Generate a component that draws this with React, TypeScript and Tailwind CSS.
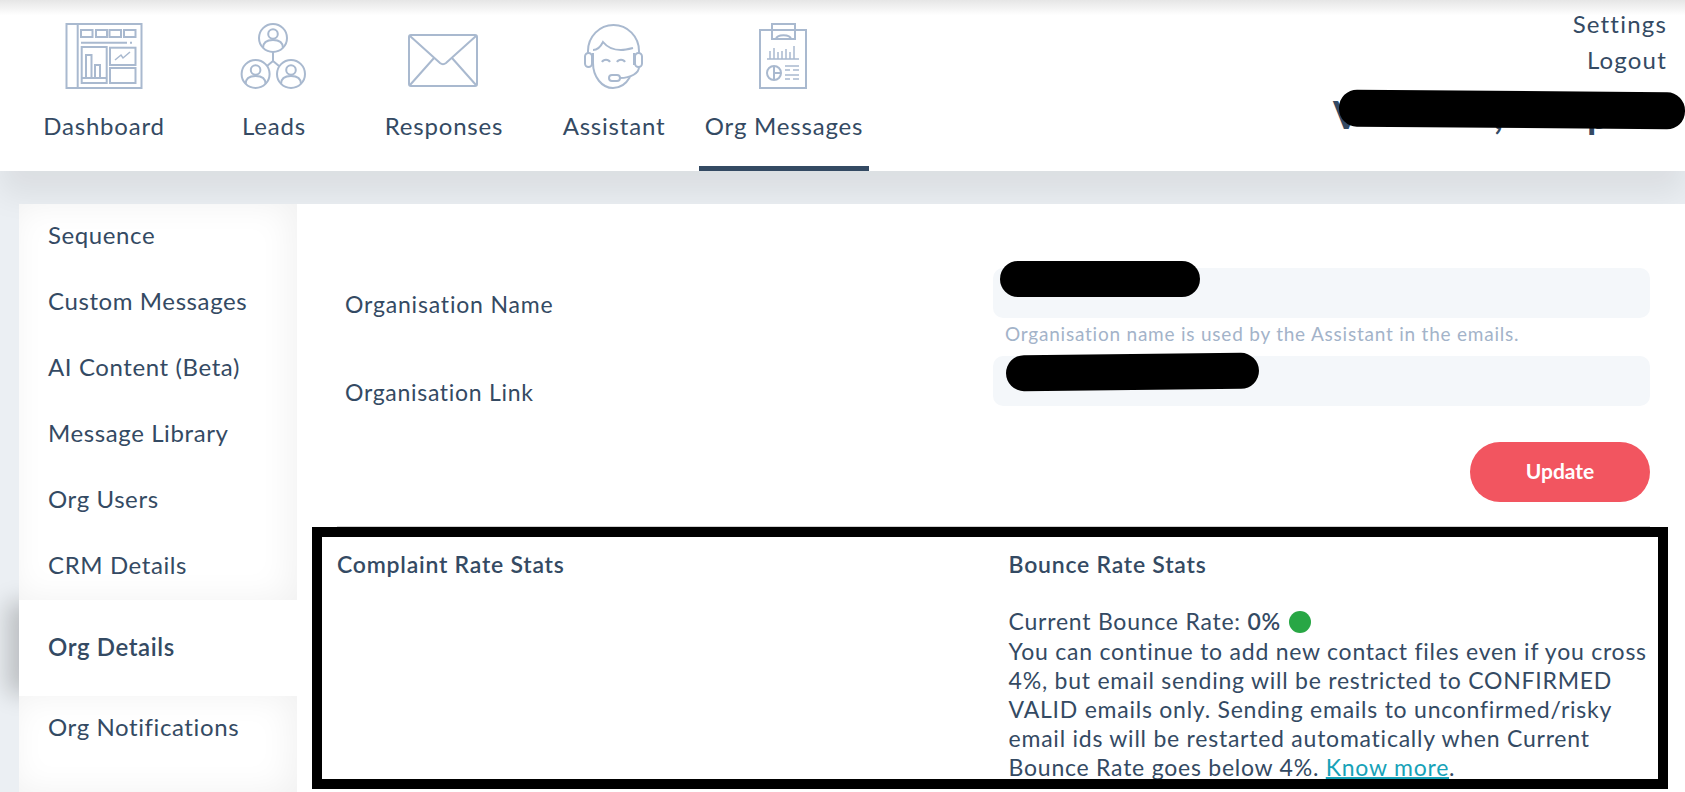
import React from "react";

const iconClass = "h-[72px] w-[80px] fill-none stroke-[#a9b9cf] stroke-[2]";

function DashboardIcon() {
  return (
    <svg viewBox="0 0 80 72" className={iconClass}>
      <rect x="2.5" y="4" width="75" height="64" />
      <path d="M13.7 4v64" />
      <rect x="17" y="10" width="11.5" height="7" />
      <rect x="32" y="10" width="11" height="7" />
      <rect x="45.5" y="10" width="11.5" height="7" />
      <rect x="60" y="10" width="11.5" height="7" />
      <path d="M17 22.7h46M66 22.7h2" />
      <rect x="17.7" y="27" width="25" height="36" />
      <path d="M17.7 58h25" />
      <rect x="22" y="35" width="5.5" height="23" />
      <rect x="31" y="45" width="5" height="13" />
      <rect x="46" y="27.7" width="25.5" height="17.3" />
      <path d="M51 40l6-5 2 3 7-6" strokeWidth="1.5" />
      <rect x="46" y="48" width="25.5" height="15" />
    </svg>
  );
}

function Person({ cx, cy }: { cx: number; cy: number }) {
  return (
    <g>
      <circle cx={cx} cy={cy} r="14" />
      <circle cx={cx} cy={cy - 4} r="4.8" />
      <path d={`M${cx - 10} ${cy + 10}c0-6 4-8 10-8s10 2 10 8`} />
    </g>
  );
}

function LeadsIcon() {
  return (
    <svg viewBox="0 0 80 72" className={iconClass}>
      <Person cx={39} cy={18} />
      <Person cx={21.6} cy={54} />
      <Person cx={57} cy={54} />
      <path d="M39 32v9M39 41l-6 5M39 41l6 5" />
    </svg>
  );
}

function ResponsesIcon() {
  return (
    <svg viewBox="0 0 80 72" className={iconClass}>
      <rect x="5" y="15" width="68" height="51" rx="2" />
      <path d="M6 16l30 27c2 1.6 4 1.6 6 0l30-27M6 65l24-27M72 65L48 38" />
    </svg>
  );
}

function AssistantIcon() {
  return (
    <svg viewBox="0 0 80 72" className={iconClass}>
      <path d="M14 33v-2a25.5 26 0 0 1 51 0v2" />
      <rect x="11" y="33" width="7" height="14" rx="3.5" />
      <rect x="61" y="33" width="7" height="14" rx="3.5" />
      <path d="M19 30c5 0 8-4 10-8 4 5 10 8 18 8 4 0 8-1 12-2" />
      <path d="M19 33v10c0 14 9 25 20 25 7 0 13-4 17-11M60 33v12" />
      <path d="M65 47c0 6-8 11-19 11" />
      <rect x="35" y="55" width="11" height="6" rx="3" />
      <path d="M28 42c1.5-3 6.5-3 8 0M43 42c1.5-3 6.5-3 8 0" />
    </svg>
  );
}

function OrgMessagesIcon() {
  return (
    <svg viewBox="0 0 80 72" className={iconClass}>
      <rect x="16" y="10" width="46" height="58" />
      <path d="M28 4h23v15H28zM32 19c1-5 14-5 15 0" />
      <path d="M23 39h32M26 39v-8M30 39v-11M34 39v-7M38 39v-8M42 39v-10M46 39v-7M50 39v-13" strokeWidth="1.5" />
      <circle cx="30" cy="53" r="7" />
      <path d="M30 46v14M30 53h7" />
      <path d="M41 46h14M41 50h5M49 50h6M41 55h14M41 59h5M49 59h6" strokeWidth="1.5" />
    </svg>
  );
}

const tabs = [
  { label: "Dashboard", icon: <DashboardIcon /> },
  { label: "Leads", icon: <LeadsIcon /> },
  { label: "Responses", icon: <ResponsesIcon /> },
  { label: "Assistant", icon: <AssistantIcon /> },
  { label: "Org Messages", icon: <OrgMessagesIcon />, active: true },
];

const sideItems = ["Sequence", "Custom Messages", "AI Content (Beta)", "Message Library", "Org Users", "CRM Details"];

const sideGroup = "relative z-10 bg-white shadow-[inset_-6px_0_34px_rgba(0,0,0,0.06)]";
const sideItem = "flex h-[66px] items-center pb-[4px] pl-[29px]";

function Blob({ className }: { className: string }) {
  return <div className={`absolute rounded-[18px] bg-black ${className}`} />;
}

export default function App() {
  return (
    <div className="flex h-[792px] w-[1685px] flex-col overflow-hidden bg-[#ebeff3] font-['Lato',sans-serif] text-[#344a63]">
      <header className="relative z-10 flex h-[171px] shrink-0 bg-gradient-to-b from-[#e6e6e6] via-white via-[9%] to-white pl-[19px] shadow-[0_24px_30px_rgba(0,0,0,0.07)]">
        {tabs.map((t) => (
          <div
            key={t.label}
            className={`flex h-[171px] w-[170px] flex-col items-center border-b-[5px] pt-[20px] ${
              t.active ? "border-[#344a63]" : "border-transparent"
            }`}
          >
            {t.icon}
            <span className="mt-[19px] text-[24px] leading-[30px] tracking-[0.8px]">{t.label}</span>
          </div>
        ))}
        <div className="ml-auto flex flex-col items-end pr-[18px] pt-[6px] text-[24px] leading-[36px] tracking-[1.2px]">
          <span>Settings</span>
          <span>Logout</span>
        </div>
        <span className="absolute left-[1333px] top-[91px] text-[38px] font-bold leading-[46px]">V</span>
        <span className="absolute left-[1494px] top-[91px] text-[38px] font-bold leading-[46px]">,</span>
        <span className="absolute left-[1587px] top-[91px] text-[38px] font-bold leading-[46px]">p</span>
        <div className="absolute left-[1339px] top-[91px] h-[37px] w-[346px] rotate-[0.5deg] rounded-[18px] bg-black" />
      </header>

      <div className="flex flex-1 pl-[19px] pt-[33px]">
        <aside className="relative z-20 flex w-[278px] shrink-0 flex-col text-[24px] tracking-[0.6px]">
          <div className={sideGroup}>
            {sideItems.map((s) => (
              <div key={s} className={sideItem}>
                {s}
              </div>
            ))}
          </div>
          <div className="flex h-[96px] items-center bg-white pb-[3px] pl-[29px] font-semibold shadow-[-14px_0_22px_-2px_rgba(0,0,0,0.2)]">
            Org Details
          </div>
          <div className={`${sideGroup} flex-1`}>
            <div className={sideItem}>Org Notifications</div>
          </div>
        </aside>

        <main className="relative z-20 flex-1 bg-white">
          <div className="relative ml-[696px] mr-[35px] pt-[64px]">
            <div className="h-[50px] rounded-[10px] bg-[#f4f7fa]" />
            <p className="mt-[5px] whitespace-nowrap pl-[12px] text-[19px] leading-[22px] tracking-[0.78px] text-[#a3b3c9]">
              Organisation name is used by the Assistant in the emails.
            </p>
            <div className="mt-[11px] h-[50px] rounded-[10px] bg-[#f4f7fa]" />
            <div className="mt-[36px] flex justify-end">
              <button className="h-[60px] w-[180px] rounded-[30px] bg-[#f25560] pb-[3px] text-[21px] font-bold text-white">
                Update
              </button>
            </div>
            <Blob className="left-[7px] top-[57px] h-[36px] w-[200px]" />
            <Blob className="left-[13px] top-[150px] h-[36px] w-[253px] -rotate-[0.6deg]" />
            <div className="absolute -left-[696px] top-[84px] whitespace-nowrap pl-[48px] text-[23px] leading-[32px] tracking-[0.82px]">
              Organisation Name
            </div>
            <div className="absolute -left-[696px] top-[172px] whitespace-nowrap pl-[48px] text-[23px] leading-[32px] tracking-[0.7px]">
              Organisation Link
            </div>
          </div>

          <div className="ml-[40px] mr-[35px] mt-[24px] h-px bg-[#d0d0d0]" />

          <div className="ml-[15px] mr-[17px] grid h-[262px] grid-cols-[671.6px_1fr] overflow-hidden border-[10px] border-black pl-[15px] pt-[13px] text-[23px] leading-[29px] tracking-[0.76px]">
            <div className="font-semibold">Complaint Rate Stats</div>
            <div>
              <div className="font-semibold">Bounce Rate Stats</div>
              <div className="mt-[28px] flex items-center gap-[8px]">
                <span>
                  Current Bounce Rate: <span className="font-semibold">0%</span>
                </span>
                <span className="h-[22px] w-[22px] rounded-full bg-[#28a745]" />
              </div>
              <div className="mt-[1px]">
                You can continue to add new contact files even if you cross 4%, but email sending will be restricted to
                CONFIRMED VALID emails only. Sending emails to unconfirmed/risky email ids will be restarted
                automatically when Current Bounce Rate goes below 4%.{" "}
                <a className="text-[#17a2b8] underline decoration-[2px]">Know more</a>.
              </div>
            </div>
          </div>
        </main>
      </div>
    </div>
  );
}
